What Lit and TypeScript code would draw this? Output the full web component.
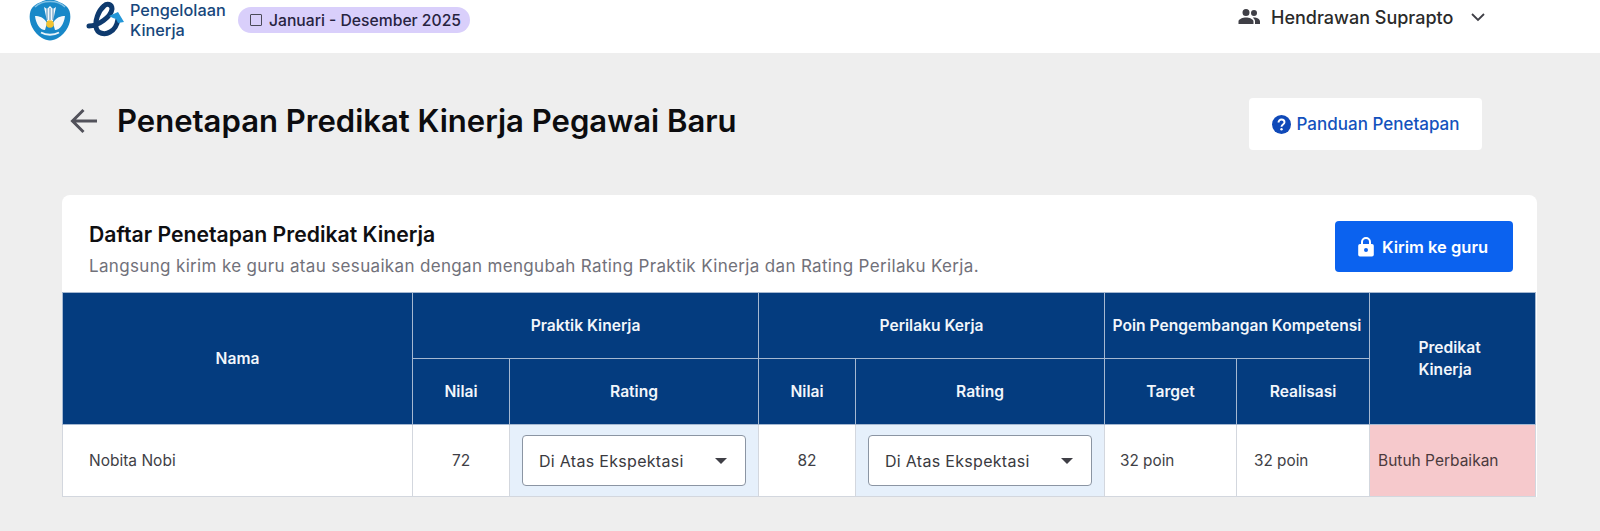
import { LitElement, html, css, svg } from "lit";
import { customElement } from "lit/decorators.js";

const caret = svg`<svg class="caret" width="12" height="6" viewBox="0 0 12 6"><path d="M0 0h12L6 6z" fill="#3f3f46"/></svg>`;

@customElement("app-root")
export class AppRoot extends LitElement {
  static styles = css`
    :host { display: block; height: 531px; overflow: hidden; background: #eeeeee; font-family: Inter, "Liberation Sans", sans-serif; color: #111; }
    * { box-sizing: border-box; }
    .top { height: 53px; background: #fff; display: flex; align-items: flex-start; padding-left: 29px; overflow: hidden; }
    .emblem { width: 42px; height: 42px; margin-top: -1px; flex: none; }
    .elogo { width: 40px; height: 36px; margin: 1px 0 0 15px; flex: none; }
    .brand { margin: 0 0 0 4px; font-size: 16.3px; line-height: 20px; font-weight: 500; color: #17477c; width: 104px; flex: none; }
    .chip { margin: 7px 0 0 4px; height: 26px; width: 232px; border-radius: 13px; background: #d9cffb; display: flex; align-items: center; gap: 7px; padding-left: 12px; font-size: 15.7px; font-weight: 500; color: #27233f; white-space: nowrap; flex: none; }
    .square { width: 12px; height: 12px; border: 1.5px solid #4a4a58; border-radius: 1px; flex: none; }
    .user { margin: 5px 0 0 auto; width: 363px; height: 24px; display: flex; align-items: center; font-size: 18px; font-weight: 500; color: #2a2a2a; flex: none; }
    .user .name { margin-left: 10px; white-space: nowrap; }
    .user .chev { margin-left: 17px; }
    .titlebar { display: flex; align-items: center; height: 142px; padding: 0 118px 0 70px; }
    .head { display: flex; align-items: center; margin-bottom: 7px; }
    .head h1 { margin: 0 0 0 19px; font-size: 31.05px; line-height: 40px; font-weight: 600; color: #0c0c0f; white-space: nowrap; }
    .guide { margin-left: auto; width: 233px; height: 52px; background: #fff; border-radius: 4px; display: flex; align-items: center; justify-content: center; gap: 6px; font-size: 17px; font-weight: 500; color: #1352bd; white-space: nowrap; }
    .card { margin: 0 63px 0 62px; background: #fff; border-radius: 8px 8px 0 0; }
    .cardhead { height: 97px; display: flex; justify-content: space-between; padding: 26px 24px 0 27px; }
    .cardhead h2 { margin: 0; font-size: 21.2px; line-height: 26px; font-weight: 600; color: #0f0f12; }
    .cardhead p { margin: 8px 0 0; font-size: 17px; line-height: 22px; color: #71717a; letter-spacing: 0.34px; white-space: nowrap; }
    .send { width: 178px; height: 51px; background: #0b62ef; color: #fff; border-radius: 4px; display: flex; align-items: center; justify-content: center; gap: 7px; font-size: 16.5px; font-weight: 600; white-space: nowrap; }
    .send svg { margin-left: -3px; }
    table { width: 1474px; table-layout: fixed; border-collapse: collapse; }
    th { background: #043c7f; color: #f2f6fb; font-size: 15.6px; font-weight: 600; line-height: 22px; border: 1.5px solid #a5b8d1; padding: 0; text-align: center; }
    .r1 th { height: 66px; } .r2 th { height: 66px; }
    .stack { display: inline-block; text-align: left; margin-right: 6px; }
    td { height: 72px; border: 1.5px solid #d3d7de; font-size: 15.5px; color: #3f3f46; padding: 0; background: #fff; }
    .c-name { padding-left: 26px; }
    .c-num { text-align: center; }
    .c-sel { background: #e6f0fb; padding: 0 12px; }
    .c-poin { padding-left: 15px; font-size: 15.3px; }
    .c-poin2 { padding-left: 17px; font-size: 15.3px; }
    .c-bad { background: #f6c9cc; padding-left: 8px; color: #4b3a3d; font-size: 15.5px; white-space: nowrap; }
    .select { height: 51px; background: #fff; border: 1px solid #8b95a3; border-radius: 4px; display: flex; align-items: center; justify-content: space-between; padding: 0 18px 0 16px; font-size: 16px; color: #3a3a40; letter-spacing: 0.3px; white-space: nowrap; }
    .w1 { width: 350px; } .w2 { width: 97px; } .w3 { width: 249px; } .w4 { width: 132px; } .w5 { width: 133px; } .w6 { width: 166px; }
  `;

  private emblem() {
    return svg`<svg class="emblem" viewBox="0 0 42 42">
      <path d="M21 0.5c4 0 7 1.500 10 3 4 1.500 8 4 9.500 8.500 1.500 4.500 1 11-1.500 16-2.500 5-6 8.500-10 11-2.500 1.500-5.500 2.500-8 2.500s-5.500-1-8-2.500c-4-2.500-7.500-6-10-11C.5 23 0 16.500 1.500 12 3 7.500 7 5 11 3.500c3-1.500 6-3 10-3z" fill="#1888c8"/>
      <path d="M6 8c4-4 9-5.500 15-5.500S32 4 36 8" fill="none" stroke="#7fc0e4" stroke-width="1.500"/>
      <path d="M15 8l3 14h6l3-14-3 2-3-3-3 3z" fill="#f4f8fb"/>
      <path d="M18 10v11M21 9v12M24 10v11" stroke="#1f6fa8" stroke-width=".8"/>
      <path d="M6 17c4 0 9 1 12 7l-2 7c-5 0-9-6-10-14zM36 17c-4 0-9 1-12 7l2 7c5 0 9-6 10-14z" fill="#f4f8fb"/>
      <circle cx="21" cy="25" r="3.800" fill="#f2c230"/>
      <path d="M12 33.500c5 3 13 3 18 0" stroke="#e9f3f9" stroke-width="1.800" fill="none"/>
    </svg>`;
  }

  private elogo() {
    return svg`<svg class="elogo" viewBox="0 0 40 36">
      <path d="M3 25C12 25 25 16 26 8 26 3 21 2 18 5 12 10 9 20 10 26 11 33 19 34 24 31 28 29 31 25 32 18" fill="none" stroke="#0e3a6e" stroke-width="5" stroke-linecap="round"/>
      <path d="M32 11l-9 4 4 2 3 1 2 4 6-1z" fill="#2497d8"/>
    </svg>`;
  }

  render() {
    return html`
      <header class="top">
        ${this.emblem()}
        ${this.elogo()}
        <div class="brand">Pengelolaan Kinerja</div>
        <div class="chip"><span class="square"></span>Januari - Desember 2025</div>
        <div class="user">
          <svg width="24" height="24" viewBox="0 0 24 24"><path fill="#3f3f46" d="M9 11a3.500 3.500 0 1 0 0-7 3.500 3.500 0 0 0 0 7zm8 0a3 3 0 1 0 0-6 3 3 0 0 0 0 6zM1.500 19v-2.500C1.500 14 6 12.500 9 12.500s7.500 1.500 7.500 4V19zm16.500 0v-2.500c0-1.500-.8-2.800-2.200-3.700.4-.1.900-.2 1.200-.2 2.600 0 6 1.300 6 3.900V19z"/></svg>
          <span class="name">Hendrawan Suprapto</span>
          <svg class="chev" width="16" height="10" viewBox="0 0 16 10"><path d="M2 2l6 6 6-6" fill="none" stroke="#3f3f46" stroke-width="1.800"/></svg>
        </div>
      </header>
      <div class="titlebar">
        <div class="head">
          <svg width="28" height="26" viewBox="0 0 28 26"><path d="M27 13H3M13.500 2L2.500 13l11 11" fill="none" stroke="#52525b" stroke-width="3"/></svg>
          <h1>Penetapan Predikat Kinerja Pegawai Baru</h1>
        </div>
        <div class="guide">
          <svg width="19" height="19" viewBox="0 0 19 19"><circle cx="9.500" cy="9.500" r="9.500" fill="#0f49b8"/><path d="M6.500 7.500c0-1.800 1.300-3 3-3s3 1.100 3 2.800c0 2.200-3 2.300-3 4.500" fill="none" stroke="#fff" stroke-width="1.900"/><circle cx="9.500" cy="14.300" r="1.200" fill="#fff"/></svg>
          Panduan Penetapan
        </div>
      </div>
      <section class="card">
        <div class="cardhead">
          <div>
            <h2>Daftar Penetapan Predikat Kinerja</h2>
            <p>Langsung kirim ke guru atau sesuaikan dengan mengubah Rating Praktik Kinerja dan Rating Perilaku Kerja.</p>
          </div>
          <div class="send">
            <svg width="18" height="20" viewBox="0 0 18 20"><path fill="#fff" d="M15 7h-1V5a5 5 0 0 0-10 0v2H3a1.800 1.800 0 0 0-1.800 1.800v9A1.800 1.800 0 0 0 3 19.600h12a1.800 1.800 0 0 0 1.800-1.800v-9A1.800 1.800 0 0 0 15 7zM6 5a3 3 0 0 1 6 0v2H6zm3 10a2 2 0 1 1 0-4 2 2 0 0 1 0 4z"/></svg>
            Kirim ke guru
          </div>
        </div>
        <table>
          <colgroup>
            <col class="w1"><col class="w2"><col class="w3"><col class="w2"><col class="w3"><col class="w4"><col class="w5"><col class="w6">
          </colgroup>
          <thead>
            <tr class="r1">
              <th rowspan="2">Nama</th>
              <th colspan="2">Praktik Kinerja</th>
              <th colspan="2">Perilaku Kerja</th>
              <th colspan="2">Poin Pengembangan Kompetensi</th>
              <th rowspan="2"><span class="stack">Predikat<br>Kinerja</span></th>
            </tr>
            <tr class="r2">
              <th>Nilai</th><th>Rating</th><th>Nilai</th><th>Rating</th><th>Target</th><th>Realisasi</th>
            </tr>
          </thead>
          <tbody>
            <tr>
              <td class="c-name">Nobita Nobi</td>
              <td class="c-num">72</td>
              <td class="c-sel"><div class="select">Di Atas Ekspektasi ${caret}</div></td>
              <td class="c-num">82</td>
              <td class="c-sel"><div class="select">Di Atas Ekspektasi ${caret}</div></td>
              <td class="c-poin">32 poin</td>
              <td class="c-poin2">32 poin</td>
              <td class="c-bad">Butuh Perbaikan</td>
            </tr>
          </tbody>
        </table>
      </section>
    `;
  }
}
